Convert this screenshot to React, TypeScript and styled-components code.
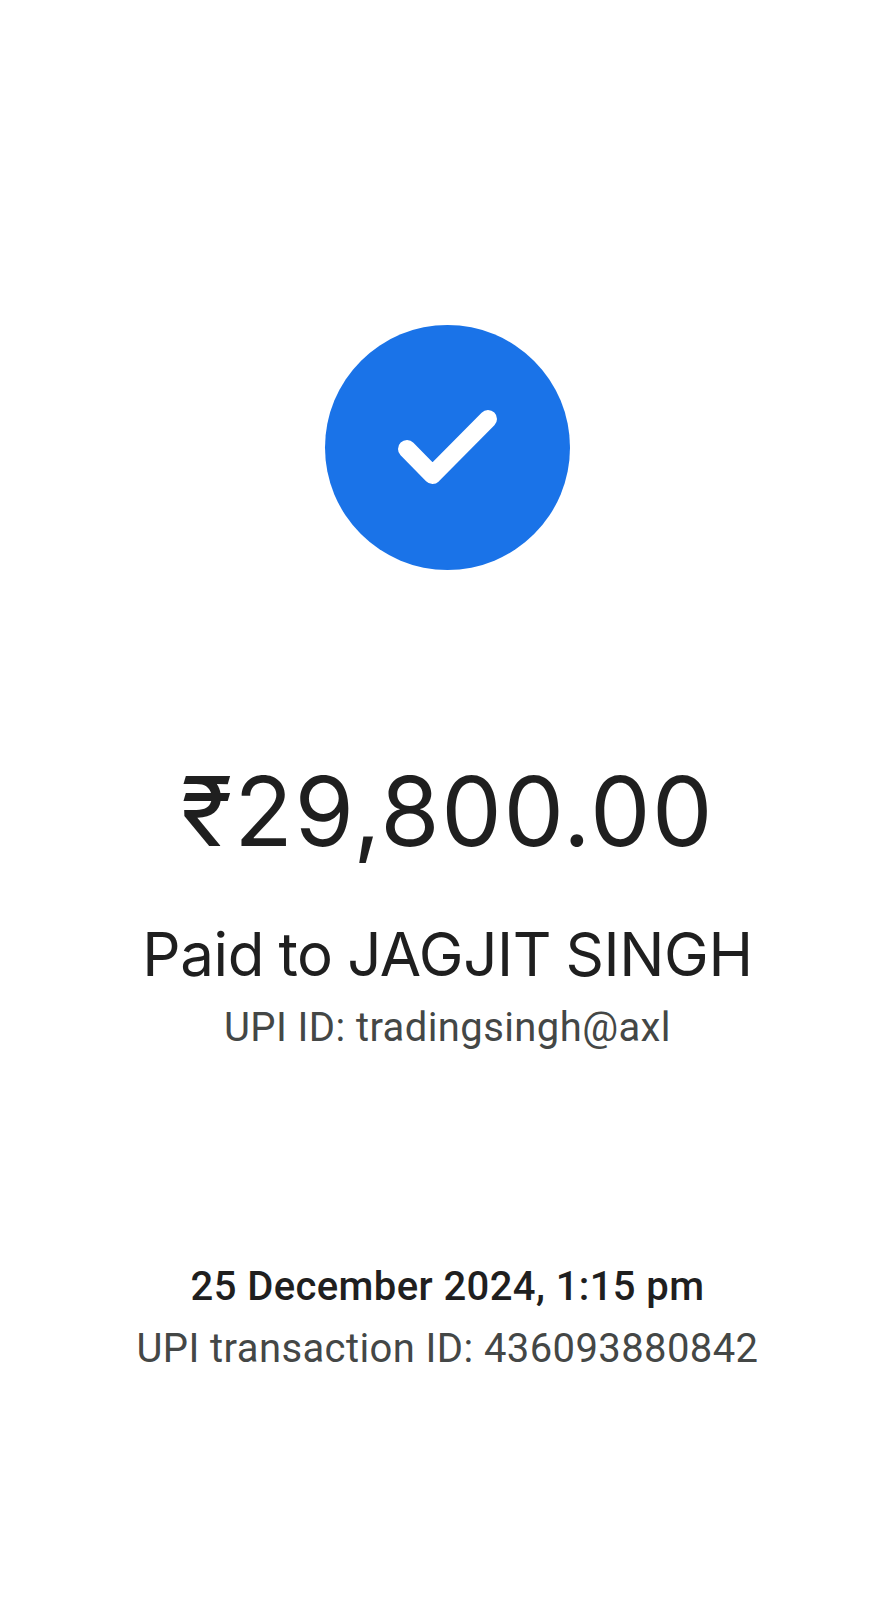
import React from "react";
import styled, { createGlobalStyle } from "styled-components";

const GlobalStyle = createGlobalStyle`
    html, body {
        margin: 0;
        padding: 0;
        background: #fff;
    }
`;

const Screen = styled.main`
    width: 895px;
    height: 1599px;
    padding-top: 325px;
    box-sizing: border-box;
    display: flex;
    flex-direction: column;
    align-items: center;
    background: #fff;
    color: #1f1f1f;
    text-align: center;
    overflow: hidden;
`;

const Badge = styled.div`
    width: 245px;
    height: 245px;
    border-radius: 50%;
    background: #1a73e8;
    display: flex;
    align-items: center;
    justify-content: center;
`;

const Amount = styled.h1`
    margin: 183px 0 0;
    font: 430 96px/116px "Inter", sans-serif;
    letter-spacing: 1.6px;
    white-space: nowrap;
`;

const Payee = styled.h2`
    margin: 49px 0 7px;
    font: 400 60px/72px "Inter", sans-serif;
    letter-spacing: -0.4px;
    word-spacing: -2px;
    white-space: nowrap;
`;

const Detail = styled.p<{ $strong?: boolean }>`
    margin: 0;
    font: ${(p) => (p.$strong ? 500 : 400)} 40px/62px "Roboto", sans-serif;
    letter-spacing: 0.4px;
    color: ${(p) => (p.$strong ? "#1f1f1f" : "#444746")};
    white-space: nowrap;
`;

const Receipt = styled.div`
    margin-top: 197px;
    display: flex;
    flex-direction: column;
    align-items: center;
`;

export default function App() {
    return (
        <>
            <GlobalStyle />
            <Screen>
                <Badge>
                    <svg width="245" height="245" viewBox="0 0 245 245" fill="none">
                        <path
                            d="M82 124 L107.5 150 L163 94"
                            stroke="#fff"
                            strokeWidth="18"
                            strokeLinecap="round"
                            strokeLinejoin="round"
                        />
                    </svg>
                </Badge>
                <Amount>₹29,800.00</Amount>
                <Payee>Paid to JAGJIT SINGH</Payee>
                <Detail>UPI ID: tradingsingh@axl</Detail>
                <Receipt>
                    <Detail $strong>25 December 2024, 1:15 pm</Detail>
                    <Detail>UPI transaction ID: 436093880842</Detail>
                </Receipt>
            </Screen>
        </>
    );
}
